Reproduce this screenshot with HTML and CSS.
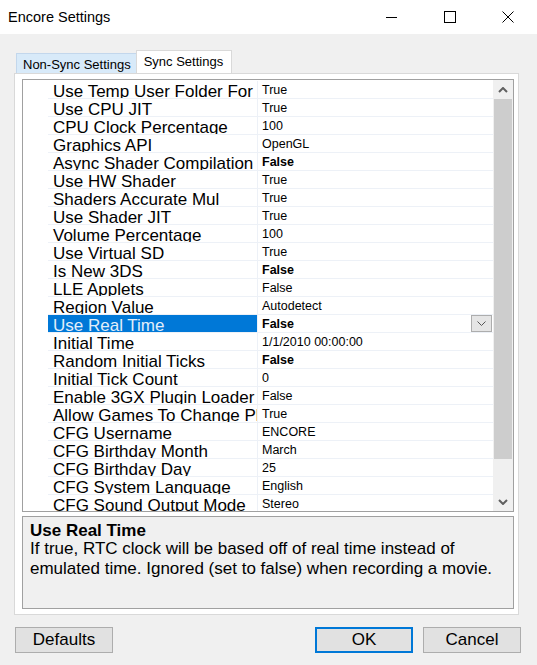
FILE: index.html
```html
<!DOCTYPE html>
<html lang="en">
<head>
  <meta charset="UTF-8">
  <title>Encore Settings</title>
  <link rel="stylesheet" href="styles.css">
</head>
<body>
  <div class="titlebar">
    <div class="title">Encore Settings</div>
    <div class="ctl"><svg width="12" height="12" viewBox="0 0 12 12"><path d="M0 6.5H11" stroke="#000" stroke-width="1"/></svg></div>
    <div class="ctl"><svg width="12" height="12" viewBox="0 0 12 12"><rect x="0.5" y="0.5" width="11" height="11" fill="none" stroke="#000"/></svg></div>
    <div class="ctl"><svg width="12" height="12" viewBox="0 0 12 12"><path d="M0.5 0.5L11.5 11.5M11.5 0.5L0.5 11.5" stroke="#000" stroke-width="1"/></svg></div>
  </div>

  <div class="main">
    <div class="tabs">
      <div class="tab">Non-Sync Settings</div>
      <div class="tab active">Sync Settings</div>
    </div>
    <div class="panel">
      <div class="grid">
        <div class="rows">
          <div class="row"><div class="gutter"></div><div class="label">Use Temp User Folder For</div><div class="value">True</div></div>
          <div class="row"><div class="gutter"></div><div class="label">Use CPU JIT</div><div class="value">True</div></div>
          <div class="row"><div class="gutter"></div><div class="label">CPU Clock Percentage</div><div class="value">100</div></div>
          <div class="row"><div class="gutter"></div><div class="label">Graphics API</div><div class="value">OpenGL</div></div>
          <div class="row"><div class="gutter"></div><div class="label">Async Shader Compilation</div><div class="value changed">False</div></div>
          <div class="row"><div class="gutter"></div><div class="label">Use HW Shader</div><div class="value">True</div></div>
          <div class="row"><div class="gutter"></div><div class="label">Shaders Accurate Mul</div><div class="value">True</div></div>
          <div class="row"><div class="gutter"></div><div class="label">Use Shader JIT</div><div class="value">True</div></div>
          <div class="row"><div class="gutter"></div><div class="label">Volume Percentage</div><div class="value">100</div></div>
          <div class="row"><div class="gutter"></div><div class="label">Use Virtual SD</div><div class="value">True</div></div>
          <div class="row"><div class="gutter"></div><div class="label">Is New 3DS</div><div class="value changed">False</div></div>
          <div class="row"><div class="gutter"></div><div class="label">LLE Applets</div><div class="value">False</div></div>
          <div class="row"><div class="gutter"></div><div class="label">Region Value</div><div class="value">Autodetect</div></div>
          <div class="row selected"><div class="gutter"></div><div class="label">Use Real Time</div><div class="value changed">False
            <div class="dropbtn"><svg width="9" height="5" viewBox="0 0 9 5"><path d="M0.5 0.5L4.5 4.5L8.5 0.5" fill="none" stroke="#555" stroke-width="1"/></svg></div>
          </div></div>
          <div class="row"><div class="gutter"></div><div class="label">Initial Time</div><div class="value">1/1/2010 00:00:00</div></div>
          <div class="row"><div class="gutter"></div><div class="label">Random Initial Ticks</div><div class="value changed">False</div></div>
          <div class="row"><div class="gutter"></div><div class="label">Initial Tick Count</div><div class="value">0</div></div>
          <div class="row"><div class="gutter"></div><div class="label">Enable 3GX Plugin Loader</div><div class="value">False</div></div>
          <div class="row"><div class="gutter"></div><div class="label">Allow Games To Change Pl</div><div class="value">True</div></div>
          <div class="row"><div class="gutter"></div><div class="label">CFG Username</div><div class="value">ENCORE</div></div>
          <div class="row"><div class="gutter"></div><div class="label">CFG Birthday Month</div><div class="value">March</div></div>
          <div class="row"><div class="gutter"></div><div class="label">CFG Birthday Day</div><div class="value">25</div></div>
          <div class="row"><div class="gutter"></div><div class="label">CFG System Language</div><div class="value">English</div></div>
          <div class="row"><div class="gutter"></div><div class="label">CFG Sound Output Mode</div><div class="value">Stereo</div></div>
        </div>
        <div class="scrollbar">
          <div class="sb-btn"><svg width="10" height="6" viewBox="0 0 10 6"><path d="M1 5L5 1L9 5" fill="none" stroke="#606060" stroke-width="2"/></svg></div>
          <div class="thumb"></div>
          <div class="track"></div>
          <div class="sb-btn"><svg width="10" height="6" viewBox="0 0 10 6"><path d="M1 1L5 5L9 1" fill="none" stroke="#606060" stroke-width="2"/></svg></div>
        </div>
      </div>
      <div class="desc">
        <div class="desc-title">Use Real Time</div>
        <div class="desc-text">If true, RTC clock will be based off of real time instead of emulated time. Ignored (set to false) when recording a movie.</div>
      </div>
    </div>
    <div class="buttons">
      <button class="btn">Defaults</button>
      <button class="btn ok">OK</button>
      <button class="btn cancel">Cancel</button>
    </div>
  </div>
</body>
</html>
```

FILE: styles.css
```css
body {
  margin: 0;
  width: 537px;
  height: 665px;
  background-color: #f0f0f0;
  font-family: "Liberation Sans", Arial, sans-serif;
  overflow: hidden;
}
.titlebar {
  display: flex;
  align-items: center;
  height: 34px;
  background-color: #fff;
}
.title {
  flex: 1;
  padding-left: 8px;
  padding-bottom: 1px;
  font-size: 14.5px;
  color: #000;
}
.ctl {
  width: 58px;
  height: 34px;
  display: flex;
  align-items: center;
  justify-content: center;
}
.main {
  padding-top: 17px;
}
.tabs {
  display: flex;
  align-items: flex-end;
  margin-left: 16px;
  height: 22px;
  position: relative;
  z-index: 1;
}
.tab {
  height: 19px;
  padding: 0 5px 0 6px;
  font-size: 13px;
  line-height: 21px;
  background-color: #d8eaf9;
  border: 1px solid #c3d7ec;
  border-bottom: none;
}
.tab.active {
  height: 22px;
  line-height: 21px;
  padding: 0 8px 0 7px;
  background-color: #fff;
  border-color: #d9d9d9;
  margin-left: -1px;
}
.panel {
  margin-left: 14px;
  width: 496px;
  height: 535px;
  background-color: #fff;
  border: 1px solid #d9d9d9;
  padding: 5px 0 0 7px;
}
.grid {
  display: flex;
  width: 490px;
  height: 431px;
  border: 1px solid #a0a0a0;
  background-color: #fff;
}
.rows {
  flex: 1;
  overflow: hidden;
  padding-top: 1px;
}
.row {
  display: grid;
  grid-template-columns: 25px 210px 1fr;
  height: 18px;
}
.label {
  height: 15px;
  padding: 2px 0 0 5px;
  font-size: 17px;
  line-height: 18px;
  white-space: nowrap;
  overflow: hidden;
  border-right: 1px solid #edf1f7;
  border-bottom: 1px solid #edf1f7;
}
.value {
  position: relative;
  height: 16px;
  padding: 1px 0 0 4px;
  font-size: 12.5px;
  line-height: 17px;
  white-space: nowrap;
  overflow: hidden;
  border-bottom: 1px solid #edf1f7;
}
.value.changed {
  font-weight: bold;
}
.row.selected .label {
  background-color: #0078d7;
  color: #e2eefa;
}
.dropbtn {
  position: absolute;
  right: 1px;
  top: 0;
  width: 19px;
  height: 15px;
  background-color: #e5e5e5;
  border: 1px solid #adadad;
  display: flex;
  align-items: center;
  justify-content: center;
}
.scrollbar {
  width: 20px;
  display: flex;
  flex-direction: column;
  background-color: #f0f0f0;
}
.sb-btn {
  height: 19px;
  display: flex;
  align-items: center;
  justify-content: center;
}
.thumb {
  height: 360px;
  margin: 0 1px;
  background-color: #cdcdcd;
}
.track {
  flex: 1;
}
.desc {
  margin-top: 4px;
  width: 483px;
  height: 85px;
  border: 1px solid #a0a0a0;
  background-color: #f0f0f0;
  padding: 6px 0 0 7px;
  font-size: 17px;
}
.desc-title {
  font-weight: bold;
  line-height: 16px;
}
.desc-text {
  line-height: 20px;
  padding-right: 20px;
}
.buttons {
  display: flex;
  margin-top: 12px;
  padding: 0 16px 0 15px;
}
.btn {
  width: 98px;
  height: 26px;
  font-family: "Liberation Sans", Arial, sans-serif;
  font-size: 17px;
  color: #000;
  background-color: #e1e1e1;
  border: 1px solid #adadad;
  padding: 0;
}
.btn.ok {
  margin-left: auto;
  border: 2px solid #0078d7;
}
.btn.cancel {
  margin-left: 10px;
}
```
